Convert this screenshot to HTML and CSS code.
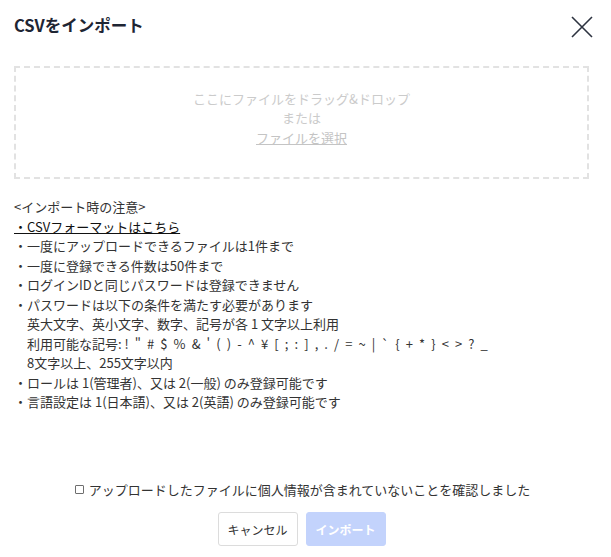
FILE: index.html
```html
<!DOCTYPE html>
<html lang="ja">
<head>
<meta charset="utf-8">
<title>CSVをインポート</title>
<link rel="stylesheet" href="styles.css">
</head>
<body>
<div class="modal">
  <div class="header">
    <h1 class="title">CSVをインポート</h1>
    <button class="close" aria-label="閉じる">
      <svg width="22" height="22" viewBox="0 0 22 22"><path d="M1 1 L21 21 M21 1 L1 21" stroke="#2d3340" stroke-width="1.6" fill="none"/></svg>
    </button>
  </div>
  <div class="dropzone">
    <div>ここにファイルをドラッグ&amp;ドロップ</div>
    <div>または</div>
    <div><a class="select" href="#">ファイルを選択</a></div>
  </div>
  <div class="notes">
    <div>&lt;インポート時の注意&gt;</div>
    <div><a class="format" href="#">・CSVフォーマットはこちら</a></div>
    <div>・一度にアップロードできるファイルは1件まで</div>
    <div>・一度に登録できる件数は50件まで</div>
    <div>・ログインIDと同じパスワードは登録できません</div>
    <div>・パスワードは以下の条件を満たす必要があります</div>
    <div class="indent">英大文字、英小文字、数字、記号が各 1 文字以上利用</div>
    <div class="indent">利用可能な記号: <span class="symbols">! " # $ % &amp; ' ( ) - ^ ¥ [ ; : ] , . / = ~ | ` { + * } &lt; &gt; ? _</span></div>
    <div class="indent">8文字以上、255文字以内</div>
    <div>・ロールは 1(管理者)、又は 2(一般) のみ登録可能です</div>
    <div>・言語設定は 1(日本語)、又は 2(英語) のみ登録可能です</div>
  </div>
  <div class="footer">
    <label class="confirm"><span class="box"></span>アップロードしたファイルに個人情報が含まれていないことを確認しました</label>
    <div class="actions">
      <button class="btn cancel">キャンセル</button>
      <button class="btn import" disabled>インポート</button>
    </div>
  </div>
</div>
</body>
</html>
```
FILE: styles.css
```css
* { box-sizing: border-box; }
html, body {
  margin: 0;
  padding: 0;
  background: #fff;
}
body {
  font-family: "Noto Sans CJK JP", "Noto Sans", sans-serif;
  color: #333;
  font-size: 13px;
  line-height: 19.5px;
}
.modal {
  display: flex;
  flex-direction: column;
  height: 557px;
  padding: 0 22px 11px 14px;
}
.header {
  display: flex;
  justify-content: space-between;
  align-items: flex-start;
  height: 66px;
  padding-top: 13px;
}
.title {
  margin: 0;
  font-size: 16.5px;
  line-height: 24px;
  font-weight: 700;
  color: #1e2533;
}
.close {
  border: none;
  background: none;
  padding: 0;
  margin: 3px -4px 0 0;
  width: 22px;
  height: 22px;
  cursor: pointer;
}
.close svg { display: block; }
.dropzone {
  height: 113px;
  border: 2px dashed #e2e2e2;
  display: flex;
  flex-direction: column;
  justify-content: center;
  align-items: center;
  padding-bottom: 9px;
  color: #cbcbcb;
}
.select {
  color: #c4c4c4;
  text-decoration: underline;
}
.notes {
  flex: 1;
  margin-top: 18px;
  color: #333;
}
.format {
  color: #111;
  text-decoration: underline;
}
.indent { padding-left: 13px; }
.symbols { letter-spacing: 1.58px; }
.footer {
  display: flex;
  flex-direction: column;
  align-items: center;
}
.confirm {
  display: flex;
  align-items: center;
  color: #333;
  padding-left: 2px;
}
.box {
  display: inline-block;
  width: 9px;
  height: 9px;
  border: 1px solid #6e6e6e;
  border-radius: 1px;
  margin-right: 5px;
}
.actions {
  display: flex;
  gap: 8px;
  margin-top: 13px;
}
.btn {
  font-family: inherit;
  width: 80px;
  height: 34px;
  font-size: 12px;
  border-radius: 3px;
  padding: 0;
}
.cancel {
  background: #fff;
  border: 1px solid #dcdcdc;
  color: #333;
}
.import {
  background: #c3d3fc;
  border: 1px solid #c3d3fc;
  color: #fff;
  font-weight: 700;
}
```
